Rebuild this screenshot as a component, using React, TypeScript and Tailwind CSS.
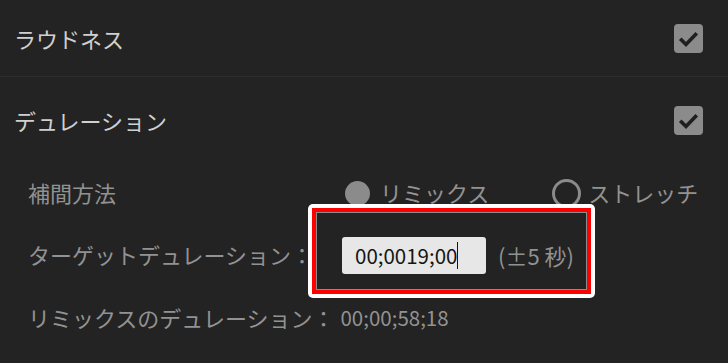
import React from "react";

function CheckBox() {
  return (
    <div className="w-[29px] h-[29px] rounded-[4px] bg-[#8b8b8b] flex items-center justify-center">
      <svg width="29" height="29" viewBox="0 0 29 29">
        <path
          d="M7.5 16 L12 20.5 L21.5 10.5"
          fill="none"
          stroke="#1f1f1f"
          strokeWidth="3.6"
          strokeLinecap="square"
          strokeLinejoin="miter"
        />
      </svg>
    </div>
  );
}

export default function App() {
  return (
    <div className="relative w-[728px] h-[363px] overflow-hidden bg-[#232323] font-['Noto_Sans_CJK_JP','Noto_Sans',sans-serif] text-[22px] leading-none">
      {/* section headers */}
      <div className="flex h-[76px] items-center justify-between pl-[14px] pr-[25px] text-[#d0d0d0]">
        <span>ラウドネス</span>
        <CheckBox />
      </div>
      <div className="h-px bg-[#2d2d2d]" />
      <div className="flex h-[86px] items-center justify-between pl-[14px] pr-[25px] text-[#d0d0d0]">
        <span>デュレーション</span>
        <CheckBox />
      </div>

      {/* duration settings */}
      <div className="pl-[28px] text-[#929292]">
        <div className="flex h-[57px] items-center">
          <span className="w-[317px]">補間方法</span>
          <div className="flex items-center mt-[4px]">
            <span className="w-[25px] h-[25px] rounded-full bg-[#8b8b8b]" />
            <span className="ml-[10px] -mt-[4px]">リミックス</span>
          </div>
          <div className="ml-[63px] flex items-center mt-[4px]">
            <span className="w-[29px] h-[29px] rounded-full border-[3.5px] border-[#8b8b8b]" />
            <span className="ml-[7px] -mt-[4px]">ストレッチ</span>
          </div>
        </div>
        <div className="flex h-[68px] items-center">
          <span>ターゲットデュレーション：</span>
        </div>
        <div className="flex h-[58px] items-center">
          <span>リミックスのデュレーション：</span>
          <span className="ml-[6px] text-[20.5px]">00;00;58;18</span>
        </div>
      </div>

      {/* highlighted annotation over the target duration field */}
      <div className="absolute left-[308px] top-[204px] w-[287px] h-[94px] rounded-[5px] bg-white p-[4px]">
        <div className="h-full border-[4px] border-[#ff0000]">
          <div className="h-full border border-[#8c8c8c] bg-[#232323] flex items-center pl-[25px] pt-[8px]">
            <div className="flex items-center w-[144px] h-[37px] rounded-[3px] bg-[#e7e7e7] pl-[13px] text-[20.5px] text-[#141414]">
              <span>00;0019;00</span>
              <span className="w-px h-[27px] bg-[#141414]" />
            </div>
            <span className="ml-[12px] text-[#929292]">(±5 秒)</span>
          </div>
        </div>
      </div>
    </div>
  );
}
